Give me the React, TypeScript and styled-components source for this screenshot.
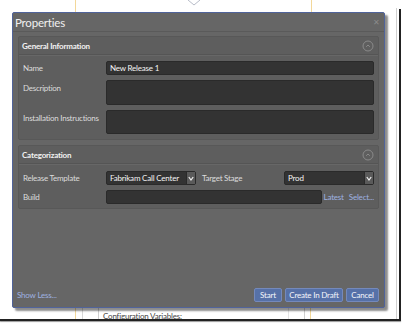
import React from "react";
import styled, { createGlobalStyle } from "styled-components";

const Global = createGlobalStyle`
  html, body { margin: 0; padding: 0; background: #fff; }
  body { width: 403px; height: 325px; overflow: hidden; font-family: "Lato", "Open Sans", sans-serif; }
  * { box-sizing: border-box; }
`;

const Stage = styled.div`
  position: relative;
  width: 403px;
  height: 325px;
  background: #fff;
  overflow: hidden;
`;

const VLine = styled.div<{ $x: number; $top: number; $bottom: number; $color: string; $w?: number }>`
  position: absolute;
  left: ${(p) => p.$x}px;
  top: ${(p) => p.$top}px;
  height: ${(p) => p.$bottom - p.$top}px;
  width: ${(p) => p.$w ?? 1}px;
  background: ${(p) => p.$color};
`;

const HLine = styled.div`
  position: absolute;
  left: 0;
  top: 319px;
  width: 401px;
  height: 2px;
  background: #222;
  box-shadow: 0 1px 1px rgba(0,0,0,0.4);
`;

const Chevron = styled.svg`
  position: absolute;
  left: 187px;
  top: 0;
`;

const BgText = styled.div`
  position: absolute;
  left: 103px;
  top: 311px;
  font-size: 8px;
  letter-spacing: -0.2px;
  color: #444;
`;

const Dialog = styled.div`
  position: absolute;
  left: 12px;
  top: 12px;
  width: 373px;
  height: 296px;
  background: #666666;
  border: 1px solid #50639a;
  border-radius: 2px;
  box-shadow: 3px 3px 2px rgba(0, 0, 0, 0.45);
  display: flex;
  flex-direction: column;
  color: #e8e8e8;
`;

const TitleBar = styled.div`
  height: 19px;
  display: flex;
  align-items: center;
  justify-content: space-between;
  padding: 0 4px 0 2px;
  border-bottom: 1px solid #5a5a5a;
`;

const Title = styled.div`
  font-size: 11.5px;
  color: #f0f0f0;
  letter-spacing: -0.2px;
`;

const Close = styled.div`
  font-size: 8px;
  color: #8a8a8a;
  line-height: 1;
`;

const Body = styled.div`
  flex: 1;
  display: flex;
  flex-direction: column;
  gap: 5px;
  padding: 4px 5px 0 5px;
`;

const Section = styled.div`
  background: #5e5e5e;
  border: 1px solid #585858;
  border-radius: 2px;
  display: flex;
  flex-direction: column;
`;

const SectionHeader = styled.div`
  height: 18px;
  display: flex;
  align-items: center;
  justify-content: space-between;
  padding: 0 4px 0 3px;
  border-bottom: 1px solid #555;
  box-shadow: 0 1px 0 #676767;
`;

const SectionTitle = styled.div`
  font-size: 8px;
  font-weight: 700;
  letter-spacing: -0.2px;
  color: #f2f2f2;
`;

const Collapse = styled.svg`
  display: block;
`;

const SectionContent = styled.div<{ $pt: number; $pb: number }>`
  padding: ${(p) => p.$pt}px 4px ${(p) => p.$pb}px 4px;
  display: flex;
  flex-direction: column;
  gap: 5px;
`;

const Row = styled.div`
  display: grid;
  grid-template-columns: 83px 1fr;
  align-items: start;
`;

const Label = styled.div<{ $pt?: number }>`
  font-size: 8px;
  letter-spacing: -0.25px;
  color: #dcdcdc;
  padding-top: ${(p) => p.$pt ?? 2}px;
  white-space: nowrap;
`;

const Field = styled.div<{ $h: number }>`
  height: ${(p) => p.$h}px;
  background: #333;
  border: 1px solid #2a2a2a;
  border-radius: 2px;
  font-size: 8px;
  letter-spacing: -0.2px;
  color: #f4f4f4;
  padding: 0 3px;
  display: flex;
  align-items: center;
`;

const CatRow = styled.div`
  display: grid;
  grid-template-columns: 83px 90px 88px 90px;
  align-items: center;
`;

const Select = styled.div`
  height: 14px;
  background: #333;
  border: 1px solid #2a2a2a;
  border-radius: 2px;
  display: flex;
  align-items: stretch;
  font-size: 8px;
  letter-spacing: -0.2px;
  color: #f4f4f4;
`;

const SelectText = styled.div`
  flex: 1;
  padding: 0 3px;
  display: flex;
  align-items: center;
  white-space: nowrap;
  overflow: hidden;
`;

const Arrow = styled.div`
  width: 9px;
  background: #5a5a5a;
  border-left: 1px solid #2a2a2a;
  display: flex;
  align-items: center;
  justify-content: center;
`;

const InlineLabel = styled.div`
  font-size: 8px;
  letter-spacing: -0.25px;
  color: #dcdcdc;
  padding-left: 6px;
  white-space: nowrap;
`;

const BuildRow = styled.div`
  display: grid;
  grid-template-columns: 83px 216px 1fr;
  align-items: center;
`;

const Links = styled.div`
  display: flex;
  gap: 5px;
  justify-content: flex-end;
  font-size: 8px;
  letter-spacing: -0.2px;
  color: #9fb2e0;
`;

const Footer = styled.div`
  display: flex;
  align-items: center;
  padding: 0 5px 5px 4px;
  height: 20px;
`;

const ShowLess = styled.div`
  font-size: 8px;
  letter-spacing: -0.2px;
  color: #9fb2e0;
  flex: 1;
`;

const Buttons = styled.div`
  display: flex;
  gap: 3px;
`;

const Button = styled.div<{ $w: number }>`
  width: ${(p) => p.$w}px;
  height: 14px;
  background: #5671a8;
  border: 1px solid #7489bb;
  border-radius: 2px;
  font-size: 8px;
  letter-spacing: -0.2px;
  color: #f4f6fb;
  display: flex;
  align-items: center;
  justify-content: center;
`;

const CollapseIcon = () => (
  <Collapse width="12" height="12" viewBox="0 0 12 12">
    <circle cx="6" cy="6" r="5" fill="none" stroke="#8a8a8a" strokeWidth="1" />
    <path d="M4.2 6.8 L6 5 L7.8 6.8" fill="none" stroke="#8a8a8a" strokeWidth="1" />
  </Collapse>
);

const DownArrow = () => (
  <svg width="6" height="5" viewBox="0 0 6 5">
    <path d="M0.8 1 L3 4 L5.2 1" fill="none" stroke="#f0f0f0" strokeWidth="1.2" />
  </svg>
);

export default function App() {
  return (
    <Stage>
      <Global />
      <VLine $x={75} $top={0} $bottom={13} $color="#f3d89a" />
      <VLine $x={311} $top={0} $bottom={13} $color="#f3d89a" />
      <Chevron width="14" height="6" viewBox="0 0 14 6">
        <path d="M1 0 L7 5 L13 0" fill="none" stroke="#b8bcc8" strokeWidth="1" />
      </Chevron>
      <VLine $x={75} $top={308} $bottom={319} $color="#f3d89a" />
      <VLine $x={82} $top={308} $bottom={319} $color="#d8d8d8" />
      <VLine $x={98} $top={308} $bottom={319} $color="#cfcfcf" />
      <VLine $x={288} $top={308} $bottom={319} $color="#e4e4e4" />
      <VLine $x={304} $top={308} $bottom={319} $color="#cfcfcf" />
      <VLine $x={310} $top={308} $bottom={319} $color="#f3d89a" />
      <VLine $x={396} $top={8} $bottom={321} $color="#d0d0d0" />
      <VLine $x={399} $top={9} $bottom={321} $color="#222" $w={2} />
      <BgText>Configuration Variables:</BgText>
      <HLine />

      <Dialog>
        <TitleBar>
          <Title>Properties</Title>
          <Close>✕</Close>
        </TitleBar>
        <Body>
          <Section>
            <SectionHeader>
              <SectionTitle>General Information</SectionTitle>
              <CollapseIcon />
            </SectionHeader>
            <SectionContent $pt={6} $pb={5}>
              <Row>
                <Label>Name</Label>
                <Field $h={14}>New Release 1</Field>
              </Row>
              <Row>
                <Label $pt={3}>Description</Label>
                <Field $h={25} />
              </Row>
              <Row>
                <Label $pt={3}>Installation Instructions</Label>
                <Field $h={24} />
              </Row>
            </SectionContent>
          </Section>
          <Section>
            <SectionHeader>
              <SectionTitle>Categorization</SectionTitle>
              <CollapseIcon />
            </SectionHeader>
            <SectionContent $pt={7} $pb={4}>
              <CatRow>
                <Label $pt={0}>Release Template</Label>
                <Select>
                  <SelectText>Fabrikam Call Center</SelectText>
                  <Arrow><DownArrow /></Arrow>
                </Select>
                <InlineLabel>Target Stage</InlineLabel>
                <Select>
                  <SelectText>Prod</SelectText>
                  <Arrow><DownArrow /></Arrow>
                </Select>
              </CatRow>
              <BuildRow>
                <Label $pt={0}>Build</Label>
                <Field $h={14} />
                <Links>
                  <span>Latest</span>
                  <span>Select...</span>
                </Links>
              </BuildRow>
            </SectionContent>
          </Section>
        </Body>
        <Footer>
          <ShowLess>Show Less...</ShowLess>
          <Buttons>
            <Button $w={28}>Start</Button>
            <Button $w={58}>Create In Draft</Button>
            <Button $w={33}>Cancel</Button>
          </Buttons>
        </Footer>
      </Dialog>
    </Stage>
  );
}
